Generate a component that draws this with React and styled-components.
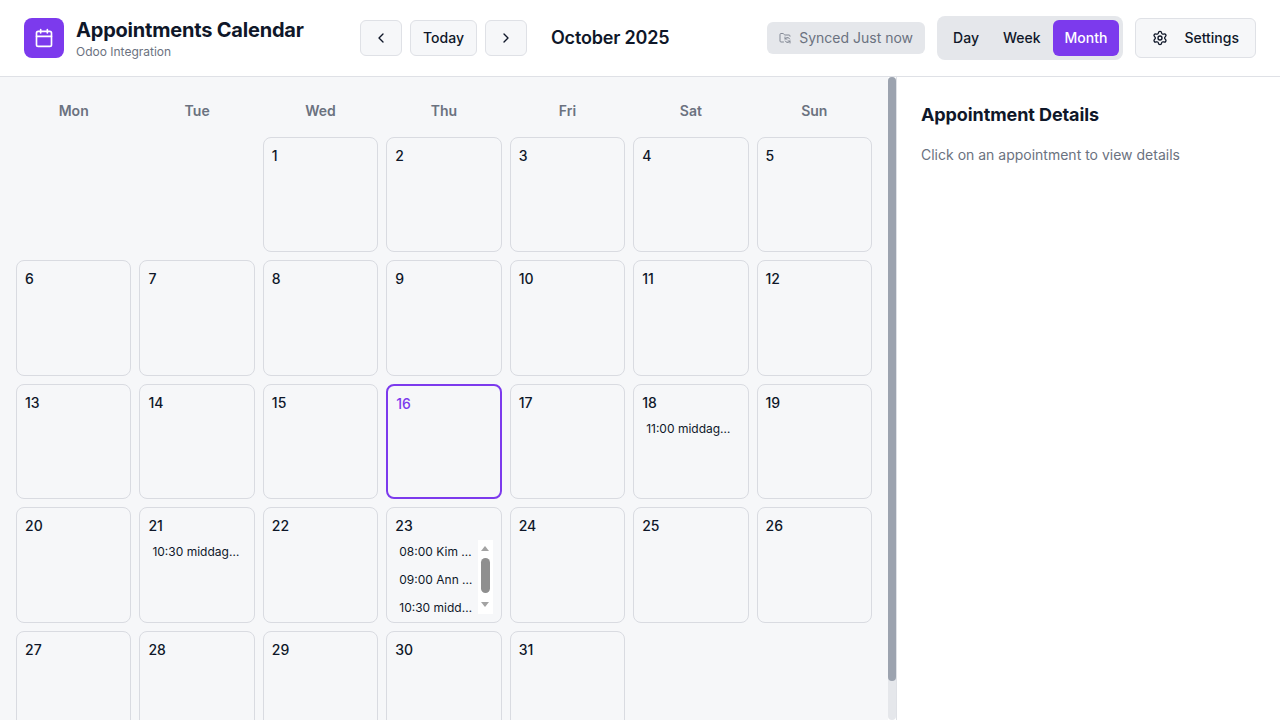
import styled, { createGlobalStyle } from "styled-components";
import { Calendar, ChevronLeft, ChevronRight, FolderSync, Settings } from "lucide-react";

const GlobalStyle = createGlobalStyle`
  * {
    box-sizing: border-box;
  }

  body {
    margin: 0;
    font-family: Inter, "Noto Sans", sans-serif;
    color: #0f1729;
    background: #ffffff;
  }
`;

const Page = styled.div`
  display: flex;
  flex-direction: column;
  height: 100vh;
  overflow: hidden;
`;

const Header = styled.header`
  display: flex;
  flex: none;
  align-items: center;
  justify-content: space-between;
  height: 77px;
  padding: 0 24px;
  background: #ffffff;
  border-bottom: 1px solid #dfe1e6;
`;

const HeaderGroup = styled.div`
  display: flex;
  align-items: center;
`;

const Brand = styled.div`
  display: flex;
  align-items: center;
  gap: 12px;
  width: 336px;
`;

const Logo = styled.div`
  display: flex;
  align-items: center;
  justify-content: center;
  width: 40px;
  height: 40px;
  color: #ffffff;
  background: #7c3aed;
  border-radius: 8px;
`;

const BrandText = styled.div`
  display: flex;
  flex-direction: column;
`;

const Title = styled.h1`
  margin: 0;
  font-size: 20px;
  line-height: 28px;
  font-weight: 700;
  letter-spacing: -0.01em;
  white-space: nowrap;
`;

const Subtitle = styled.p`
  margin: 0;
  font-size: 12px;
  line-height: 16px;
  color: #6b7280;
`;

const Nav = styled.div`
  display: flex;
  align-items: center;
  gap: 8px;
`;

const NavButton = styled.button`
  display: flex;
  align-items: center;
  justify-content: center;
  height: 36px;
  padding: 0 12px;
  font: 500 14px/20px Inter, sans-serif;
  color: #0f1729;
  background: #f6f7f9;
  border: 1px solid #dfe1e6;
  border-radius: 6px;
`;

const MonthLabel = styled.h2`
  margin: 0 0 0 24px;
  font-size: 18px;
  line-height: 28px;
  font-weight: 600;
  letter-spacing: -0.01em;
`;

const SyncPill = styled.div`
  display: flex;
  align-items: center;
  gap: 8px;
  height: 32px;
  padding: 0 12px;
  margin-right: 12px;
  font-size: 14px;
  line-height: 20px;
  color: #6b7280;
  background: #e5e7eb;
  border-radius: 6px;

  svg {
    opacity: 0.8;
  }
`;

const Segmented = styled.div`
  display: flex;
  padding: 4px;
  margin-right: 12px;
  background: #e5e7eb;
  border-radius: 8px;
`;

const Segment = styled.button`
  height: 36px;
  padding: 0 12px;
  font: 500 14px/20px Inter, sans-serif;
  color: ${({ $active }) => ($active ? "#ffffff" : "#0f1729")};
  background: ${({ $active }) => ($active ? "#7c3aed" : "transparent")};
  border: 0;
  border-radius: 6px;
`;

const SettingsButton = styled.button`
  display: flex;
  align-items: center;
  gap: 16px;
  height: 40px;
  padding: 0 16px;
  font: 500 14px/20px Inter, sans-serif;
  color: #0f1729;
  background: #f6f7f9;
  border: 1px solid #dfe1e6;
  border-radius: 6px;
`;

const Body = styled.main`
  display: flex;
  flex: 1;
  min-height: 0;
`;

const CalendarPane = styled.section`
  flex: none;
  width: 888px;
  padding: 16px;
  overflow: hidden;
  background: #f6f7f9;
`;

const ScrollRail = styled.div`
  flex: none;
  width: 8px;
  background: #e5e7eb;
  border-radius: 4px;
`;

const ScrollThumb = styled.div`
  height: 604px;
  background: #9ca3af;
  border-radius: 4px;
`;

const Grid = styled.div`
  display: grid;
  grid-template-columns: repeat(7, minmax(0, 1fr));
  gap: 8px;
`;

const Weekday = styled.div`
  padding: 8px;
  font-size: 14px;
  line-height: 20px;
  font-weight: 600;
  text-align: center;
  color: #6b7280;
`;

const Cell = styled.div`
  display: flex;
  flex-direction: column;
  aspect-ratio: 1;
  min-height: 0;
  padding: 8px;
  overflow: hidden;
  border: ${({ $today }) => ($today ? "2px solid #7c3aed" : "1px solid #d9dbe1")};
  border-radius: 8px;
`;

const DayNumber = styled.span`
  flex: none;
  font-size: 14px;
  line-height: 20px;
  font-weight: 500;
  color: ${({ $today }) => ($today ? "#7c3aed" : "#0f1729")};
`;

const EventArea = styled.div`
  display: flex;
  flex: 1;
  min-height: 0;
  margin-top: 4px;
`;

const EventList = styled.div`
  display: flex;
  flex: 1;
  flex-direction: column;
  gap: 4px;
  min-width: 0;
  overflow: hidden;
`;

const EventItem = styled.div`
  flex: none;
  padding: 4px;
  font-size: 12px;
  line-height: 16px;
  white-space: nowrap;
  overflow: hidden;
  text-overflow: ellipsis;
  color: #0f1729;
`;

const MiniRail = styled.div`
  display: flex;
  flex: none;
  flex-direction: column;
  align-items: center;
  width: 15px;
  padding-top: 6px;
  background: #ffffff;
`;

const MiniArrow = styled.span`
  width: 0;
  height: 0;
  margin-top: ${({ $down }) => ($down ? "9px" : "0")};
  border-left: 4.5px solid transparent;
  border-right: 4.5px solid transparent;
  border-top: ${({ $down }) => ($down ? "5px solid #a3a3a3" : "0")};
  border-bottom: ${({ $down }) => ($down ? "0" : "5px solid #a3a3a3")};
`;

const MiniThumb = styled.span`
  width: 9px;
  height: 35px;
  margin-top: 7px;
  background: #8f8f8f;
  border-radius: 4.5px;
`;

const Details = styled.aside`
  flex: 1;
  padding: 24px;
  background: #ffffff;
  border-left: 1px solid #dfe1e6;
`;

const DetailsTitle = styled.h3`
  margin: 0 0 16px;
  font-size: 18px;
  line-height: 28px;
  font-weight: 700;
  letter-spacing: -0.005em;
`;

const DetailsHint = styled.p`
  margin: 0;
  font-size: 14px;
  line-height: 20px;
  color: #6b7280;
`;

const weekdays = ["Mon", "Tue", "Wed", "Thu", "Fri", "Sat", "Sun"];

const events = {
  18: ["11:00 middagpauze"],
  21: ["10:30 middagpauze"],
  23: ["08:00 Kim de Vries", "09:00 Ann de Boer", "10:30 middagpauze"],
};

const days = Array.from({ length: 31 }, (_, i) => i + 1);

function App() {
  return (
    <Page>
      <GlobalStyle />
      <Header>
        <HeaderGroup>
          <Brand>
            <Logo>
              <Calendar size={20} />
            </Logo>
            <BrandText>
              <Title>Appointments Calendar</Title>
              <Subtitle>Odoo Integration</Subtitle>
            </BrandText>
          </Brand>
          <Nav>
            <NavButton aria-label="Previous month">
              <ChevronLeft size={16} />
            </NavButton>
            <NavButton>Today</NavButton>
            <NavButton aria-label="Next month">
              <ChevronRight size={16} />
            </NavButton>
          </Nav>
          <MonthLabel>October 2025</MonthLabel>
        </HeaderGroup>
        <HeaderGroup>
          <SyncPill>
            <FolderSync size={12} />
            Synced Just now
          </SyncPill>
          <Segmented>
            <Segment>Day</Segment>
            <Segment>Week</Segment>
            <Segment $active>Month</Segment>
          </Segmented>
          <SettingsButton>
            <Settings size={16} />
            Settings
          </SettingsButton>
        </HeaderGroup>
      </Header>
      <Body>
        <CalendarPane>
          <Grid>
            {weekdays.map((day) => (
              <Weekday key={day}>{day}</Weekday>
            ))}
            <div />
            <div />
            {days.map((day) => (
              <Cell key={day} $today={day === 16}>
                <DayNumber $today={day === 16}>{day}</DayNumber>
                {events[day] && (
                  <EventArea>
                    <EventList>
                      {events[day].map((event) => (
                        <EventItem key={event}>{event}</EventItem>
                      ))}
                    </EventList>
                    {events[day].length > 2 && (
                      <MiniRail>
                        <MiniArrow />
                        <MiniThumb />
                        <MiniArrow $down />
                      </MiniRail>
                    )}
                  </EventArea>
                )}
              </Cell>
            ))}
          </Grid>
        </CalendarPane>
        <ScrollRail>
          <ScrollThumb />
        </ScrollRail>
        <Details>
          <DetailsTitle>Appointment Details</DetailsTitle>
          <DetailsHint>Click on an appointment to view details</DetailsHint>
        </Details>
      </Body>
    </Page>
  );
}

export default App;
